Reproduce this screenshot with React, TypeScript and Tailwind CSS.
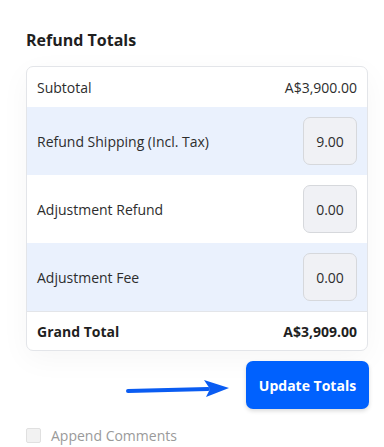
import React from "react";

const font = { fontFamily: '"Open Sans", "Noto Sans", sans-serif' };

function AmountInput({ value }: { value: string }) {
  return (
    <div className="flex h-[48px] w-[54px] items-center justify-center rounded-[7px] border border-[#d6d8dc] bg-[#f0f1f5] text-[14px] text-[#2d2d2d]">
      {value}
    </div>
  );
}

const rows = [
  { label: "Refund Shipping (Incl. Tax)", value: "9.00", bg: "bg-[#eaf1fd]" },
  { label: "Adjustment Refund", value: "0.00", bg: "bg-white" },
  { label: "Adjustment Fee", value: "0.00", bg: "bg-[#eaf1fd]" },
];

export default function App() {
  return (
    <div className="h-[447px] w-[384px] overflow-hidden bg-white pl-[26px] pr-[15px] pt-[30px]" style={font}>
      <h2 className="text-[16px] font-bold leading-[20px] text-[#1f1f1f]">Refund Totals</h2>

      <div className="mt-[16px] w-[342px] overflow-hidden rounded-[7px] border border-[#e3e5e9] bg-white shadow-[0_8px_30px_rgba(0,0,0,0.04)]">
        <div className="flex h-[40px] items-center justify-between px-[10px] text-[14px] text-[#2d2d2d]">
          <span>Subtotal</span>
          <span>A$3,900.00</span>
        </div>
        {rows.map((r) => (
          <div
            key={r.label}
            className={`flex h-[68px] items-center justify-between px-[10px] text-[14px] text-[#2d2d2d] ${r.bg}`}
          >
            <span>{r.label}</span>
            <AmountInput value={r.value} />
          </div>
        ))}
        <div className="flex h-[39px] items-center justify-between border-t border-[#e3e5e9] px-[10px] text-[14px] font-bold text-[#1f1f1f]">
          <span>Grand Total</span>
          <span>A$3,909.00</span>
        </div>
      </div>

      <div className="mt-[10px] flex items-center justify-end">
        <svg width="110" height="24" viewBox="0 0 110 24" className="mr-[10px] mt-[6px]">
          <path d="M2 15 L82 13" stroke="#0a5cf2" strokeWidth="4" strokeLinecap="round" fill="none" />
          <path d="M78 4 L103 12 L80 21 L84 13 Z" fill="#0a5cf2" />
        </svg>
        <button className="h-[48px] w-[123px] rounded-[7px] bg-[#0061fe] text-[14px] font-bold text-white shadow-[0_2px_4px_rgba(0,0,0,0.15)]">
          Update Totals
        </button>
      </div>

      <label className="mt-[16px] flex items-center gap-[10px] text-[14px] text-[#9a9a9a]">
        <span className="h-[15px] w-[15px] rounded-[2px] border border-[#e0e0e0] bg-[#f2f2f2]" />
        Append Comments
      </label>
    </div>
  );
}
